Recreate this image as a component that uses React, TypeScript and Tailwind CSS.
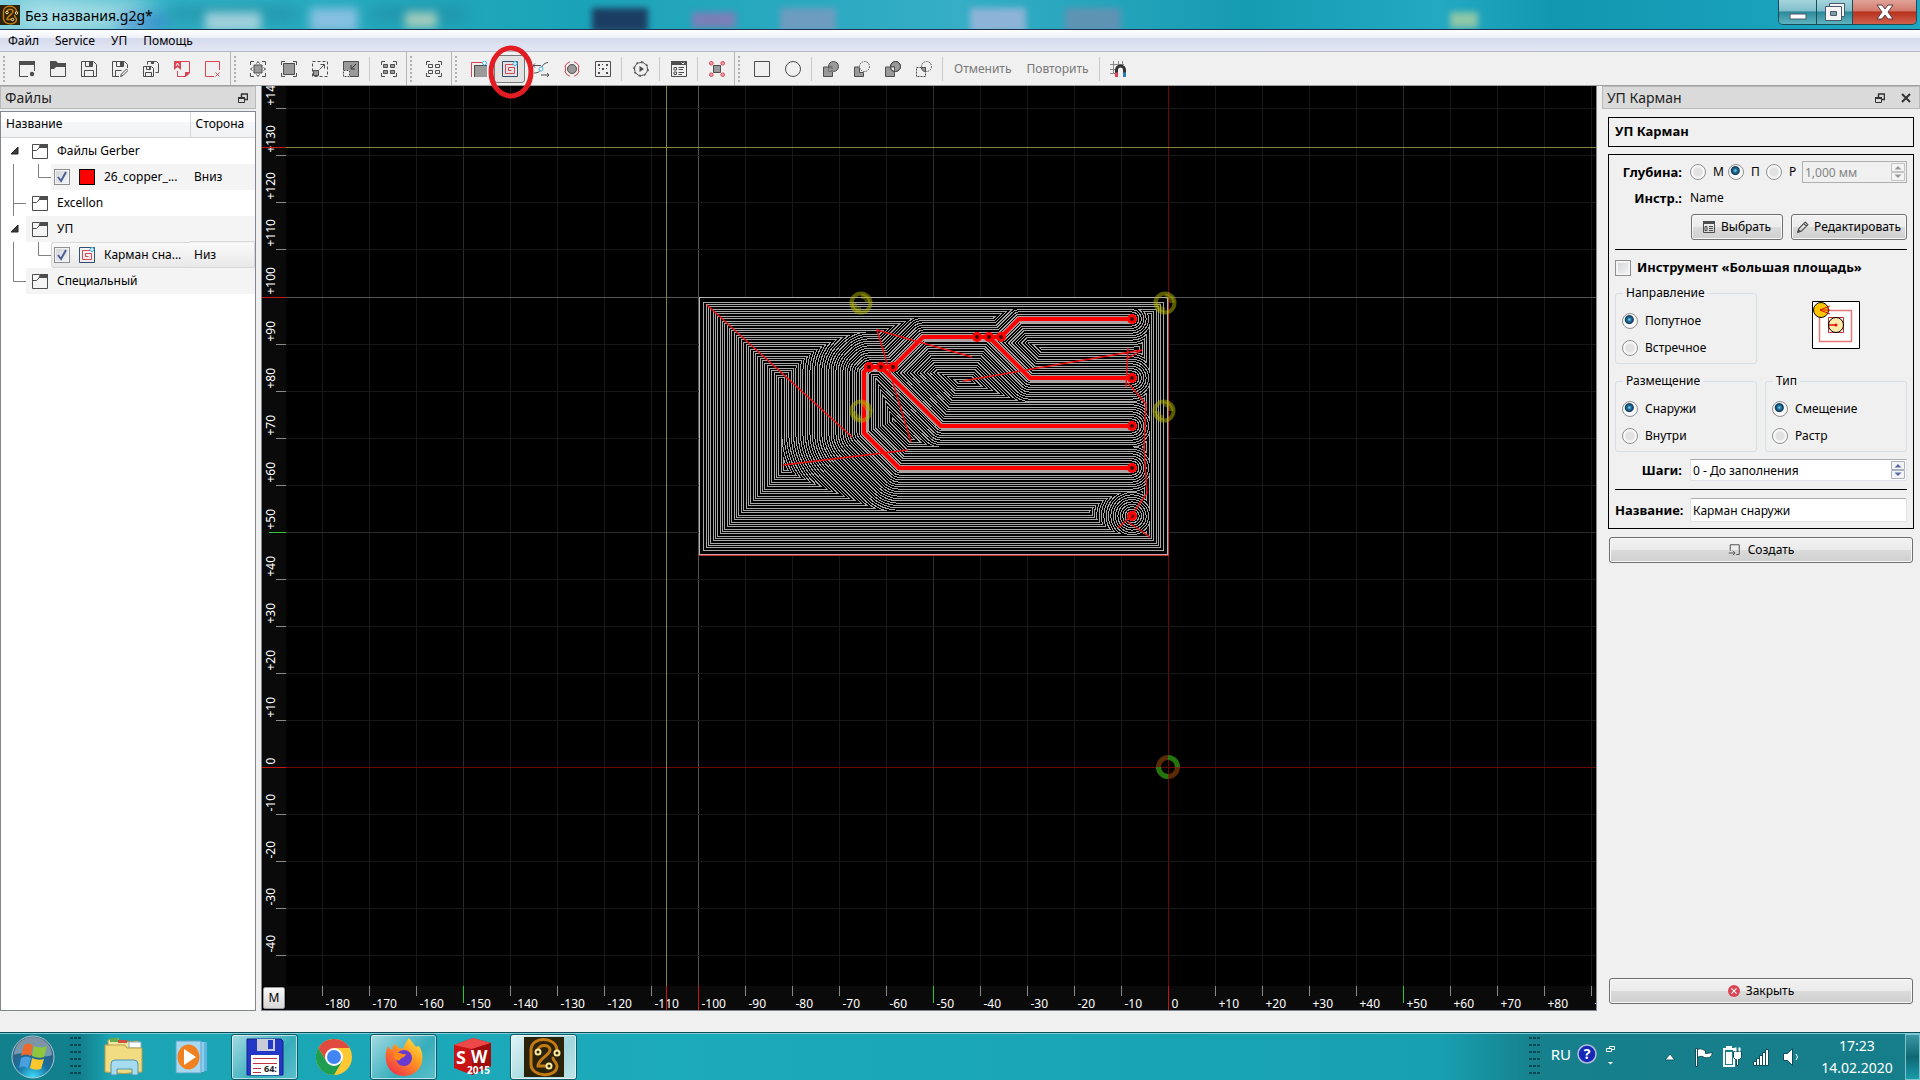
import type { ReactNode } from 'react';

/* ---------- icons ---------- */

const G = '#4d4d4d';
const R = '#da4453';
const B = '#3daee9';

function Icon({ children, size = 16 }: { children: ReactNode; size?: number }) {
  return (
    <svg width={size} height={size} viewBox="0 0 16 16" fill="none" stroke={G} strokeWidth="1" className="shrink-0">
      {children}
    </svg>
  );
}

const corners = <path d="M.5 4V.5H4M12 .5h3.5V4M15.5 12v3.5H12M4 15.5H.5V12" />;

const icons = {
  newFile: (
    <Icon>
      <path d="M0 0h16v4H0z" fill={G} stroke="none" />
      <path d="M.5 3v12.5H9M15.5 3v7" />
      <circle cx="13" cy="13" r="2.2" fill={G} stroke="none" />
    </Icon>
  ),
  open: (
    <Icon>
      <path d="M0 0h6l2 2h8v4H6L4 8H0z" fill={G} stroke="none" />
      <path d="M.5 4v11.5h15V4" />
    </Icon>
  ),
  save: (
    <Icon>
      <path d="M.5.5h12l3 3v12H.5zM4.5.5v5h7v-5M3.5 15.5v-6h9v6" />
      <path d="M8 1h3v4H8z" fill={G} stroke="none" />
    </Icon>
  ),
  saveAs: (
    <Icon>
      <path d="M7 15.5H.5V.5h12l3 3V7M4.5.5v5h7v-5M3.5 15.5v-6h6" />
      <path d="M8 1h3v4H8z" fill={G} stroke="none" />
      <path d="M8.5 15.5l1-2.5 5-5 1.5 1.5-5 5z" />
    </Icon>
  ),
  saveAll: (
    <Icon>
      <path d="M.5 5.5h8l2 2v8H.5zM3.5 5.5v3h4v-3M2.5 15.5v-4h6v4M4.5 3.5v-3h9l2 2v9h-3" />
      <path d="M6 6h2v2H6zM8 1h3v2H8z" fill={G} stroke="none" />
    </Icon>
  ),
  closeDoc: (
    <Icon>
      <g stroke={R}>
        <path d="M7 .5h8.5V12l-3.5 3.5H3.5V10" />
        <path d="M15.5 11.5h-4v4z" fill={R} />
        <path d="M0 0h7v9L3.5 6 0 9z" fill={R} stroke="none" />
        <path d="M2 5l1.5-3L5 5" stroke="#fff" />
      </g>
    </Icon>
  ),
  closeAll: (
    <Icon>
      <path d="M9 15.5H.5V.5h14V9M10.5 11.5l4 4M14.5 11.5l-4 4" stroke={R} />
    </Icon>
  ),
  fit: (
    <Icon>
      {corners}
      <path d="M4 4h8v8H4z" fill="#9a9a9a" />
      <path d="M6.5 2.5l1.5-2 1.5 2M6.5 13.5l1.5 2 1.5-2M2.5 6.5l-2 1.5 2 1.5M13.5 6.5l2 1.5-2 1.5" />
    </Icon>
  ),
  fitAll: (
    <Icon>
      {corners}
      <path d="M2.5 2.5h11v11h-11z" fill="#9a9a9a" />
    </Icon>
  ),
  zoomOut: (
    <Icon>
      <path d="M.5.5h15v15H.5z" strokeDasharray="3 2" />
      <path d="M1.5 9.5h5v5h-5z" fill="#9a9a9a" />
      <path d="M7.5 8.5L12 4M8.5 3.5h4v4" />
    </Icon>
  ),
  zoomIn: (
    <Icon>
      <path d="M.5.5h15v15H.5z" fill="#9a9a9a" />
      <path d="M0 9h7v7H0z" fill="#efefef" stroke="none" />
      <path d="M.5 9.5h6v6h-6z" strokeDasharray="2 1" />
      <path d="M13 3L8.5 7.5M8 4v4h4" stroke="#333" />
    </Icon>
  ),
  group: (
    <Icon>
      {corners}
      <path d="M2.5 3.5h4v3h-4zM9.5 3.5h4v3h-4zM2.5 9.5h4v3h-4zM9.5 9.5h4v3h-4z" fill="#9a9a9a" />
    </Icon>
  ),
  ungroup: (
    <Icon>
      {corners}
      <path d="M2.5 3.5h4v3h-4zM9.5 3.5h4v3h-4zM2.5 9.5h4v3h-4zM9.5 9.5h4v3h-4z" />
    </Icon>
  ),
  profile: (
    <Icon>
      <path d="M3 4h13v12H3z" fill="#9a9a9a" stroke="none" />
      <path d="M3.5 16V4.5H16" />
      <path d="M.5 16V1.5H11" stroke={R} />
      <circle cx="13.5" cy="2" r="2" stroke={B} fill="#fff" />
    </Icon>
  ),
  pocket: (
    <Icon>
      <path d="M.5.5h15v15H.5z" stroke="#31506e" />
      <path d="M11 3.5H3.5v9h9v-6h-6v3h3" stroke={R} />
      <circle cx="13" cy="2.5" r="2" stroke={B} fill="#d8f0fc" />
    </Icon>
  ),
  thread: (
    <Icon>
      <path d="M1 12c5 0 6-2 7-4s2-6 7-6.500" />
      <path d="M0 4.500h8M2 2.500l-2 2 2 2" />
      <path d="M8 14h8M14 12l2 2-2 2" />
      <circle cx="8" cy="8" r="2" stroke={B} fill="#fff" />
    </Icon>
  ),
  drill: (
    <Icon>
      <circle cx="8" cy="8" r="4.5" fill="#9a9a9a" />
      <path d="M6 .8A7.500 7.500 0 0 0 .8 6M.8 10A7.500 7.500 0 0 0 6 15.200M10 15.200a7.500 7.500 0 0 0 5.200-5.200M15.200 6A7.500 7.500 0 0 0 10 .8" stroke={R} />
      <path d="M1.5 5.5v5M14.5 5.5v5" stroke={R} />
    </Icon>
  ),
  dice: (
    <Icon>
      <path d="M.5.5h15v15H.5z" />
      <path d="M3 3h2v2H3zM11 3h2v2h-2zM7 7h2v2H7zM3 11h2v2H3zM11 11h2v2h-2zM7 3h1v1H7zM4 7h1v1H4zM11 7h1v1h-1z" fill={G} stroke="none" />
    </Icon>
  ),
  run: (
    <Icon>
      <circle cx="8" cy="8" r="6.5" />
      <circle cx="8" cy="8" r="7.3" strokeDasharray="2.5 3.2" />
      <path d="M6.5 5l4.5 3-4.5 3z" fill={G} stroke="none" />
    </Icon>
  ),
  props: (
    <Icon>
      <path d="M0 0h16v4H0z" fill={G} stroke="none" />
      <path d="M10.5 1.5l1.5 1.5 1.5-1.5" stroke="#fff" />
      <path d="M.5 3v12.5h15V3" />
      <path d="M3 6.5h2.5V9H3zM3 11h2.5v2.5H3zM7.5 6.5H13M7.5 8.5H12M7.5 11.5H13M7.5 13.5H11" />
    </Icon>
  ),
  snap: (
    <Icon>
      <path d="M4.5 4.5h7v7h-7z" fill="#9a9a9a" />
      <g stroke={R} fill="#f0a0a8">
        <circle cx="2.3" cy="2.3" r="1.8" />
        <circle cx="13.7" cy="2.3" r="1.8" />
        <circle cx="2.3" cy="13.7" r="1.8" />
        <circle cx="13.7" cy="13.7" r="1.8" />
      </g>
    </Icon>
  ),
  square: (
    <Icon>
      <path d="M.5.5h15v15H.5z" />
    </Icon>
  ),
  circle: (
    <Icon>
      <circle cx="8" cy="8" r="7.5" />
    </Icon>
  ),
  union: (
    <Icon>
      <circle cx="10.5" cy="5.5" r="5" fill="#9a9a9a" />
      <path d="M.5 6h9v9.5h-9z" fill="#9a9a9a" />
      <path d="M6 6.5h3.500v4H6z" stroke="#9a9a9a" fill="#9a9a9a" />
      <path d="M5.5 6.5H9v4H5.500z" strokeDasharray="1 1" />
    </Icon>
  ),
  subtract: (
    <Icon>
      <path d="M.5 6h5v5.500h4v4h-9z" fill="#9a9a9a" />
      <circle cx="10.5" cy="5.5" r="5" strokeDasharray="1.5 1" fill="#efefef" />
    </Icon>
  ),
  intersect: (
    <Icon>
      <circle cx="10.5" cy="5.5" r="5" fill="#9a9a9a" />
      <path d="M.5 6h9v9.5h-9z" fill="#9a9a9a" />
      <path d="M5.5 6h4v4.500c-2.500 0-4-1.500-4-4.500z" fill="#efefef" />
      <circle cx="10.5" cy="5.5" r="5" />
    </Icon>
  ),
  exclude: (
    <Icon>
      <circle cx="10.5" cy="5.5" r="5" strokeDasharray="1.5 1" />
      <path d="M.5 6.5h9v9h-9z" strokeDasharray="2 1" />
      <path d="M5.5 6.5h4v4c-2.500 0-4-1.500-4-4z" fill="#9a9a9a" />
    </Icon>
  ),
  magnet: (
    <Icon>
      <path d="M0 3.5h14M0 8.5h6M3.5 0v13M8.5 0v5M12.5 0v4M0 12.5h5" stroke="#888" />
      <path d="M6.500 12V9a4 4 0 0 1 8 0v3" stroke="#333" strokeWidth="3" />
      <path d="M6.500 11.500V16" stroke={R} strokeWidth="3" />
      <path d="M14.500 11.500V16" stroke="#2980b9" strokeWidth="3" />
    </Icon>
  ),
  folder: (
    <Icon>
      <path d="M.5 1.500h6.500l1.500 1h7v13H.5z" />
      <path d="M8 1h8v4H6.500z" fill={G} stroke="none" />
      <path d="M.5 7.5h4l3-3h8" />
    </Icon>
  ),
  pencil: (
    <Icon size={12}>
      <path d="M1 15l1.500-5L11 1.500 14.500 5 6 13.500zM9 3.500L12.500 7" strokeWidth="1.5" />
      <path d="M1 15l1-4 3 3z" fill={G} />
    </Icon>
  ),
  create: (
    <Icon size={12}>
      <path d="M3 9V1h12v13h-4M1 12h8M6.500 9l3 3-3 3" strokeWidth="1.3" />
    </Icon>
  ),
  cancel: (
    <Icon size={12}>
      <circle cx="8" cy="8" r="8" fill={R} stroke="none" />
      <path d="M4.5 4.5l7 7M11.5 4.5l-7 7" stroke="#fff" strokeWidth="1.5" />
    </Icon>
  ),
  float: (
    <svg width="10" height="10" viewBox="0 0 10 10" fill="none" stroke="#333" className="shrink-0">
      <path d="M3 1h7M3.5 1v5.5h6V1" strokeWidth="1.5" />
      <path d="M.5 4.5h6v5h-6z" fill="#dadada" />
      <path d="M0 5h7" strokeWidth="2" />
    </svg>
  ),
};

function AppLogo({ size }: { size: number }) {
  return (
    <svg width={size} height={size} viewBox="0 0 40 40" className="shrink-0">
      <rect width="40" height="40" fill="#2a2209" />
      <g fill="none" stroke="#c47a12" strokeWidth="3" strokeLinecap="round">
        <path d="M14 13C15 7 26 7 26 13c0 5-12 9-12 16h10" />
        <path d="M7 27V13C7-1 32-1 33 13M7 27c0 14 26 14 26 2 0-4-4-5-4-8" />
      </g>
      <g fill="#2a2209" stroke="#ffe8a0" strokeWidth="2">
        <circle cx="14" cy="15" r="2.5" />
        <circle cx="33" cy="16" r="2.5" />
        <circle cx="25" cy="29" r="2.5" />
      </g>
    </svg>
  );
}

/* ---------- window chrome ---------- */

function TitleBar() {
  return (
    <header className="relative flex h-[30px] shrink-0 items-start overflow-hidden border-b border-[#1c3354] bg-[linear-gradient(90deg,#7fd0dd_0,#2fb0c4_180px,#1aa3b8_30%,#35aec6_50%,#159bb2_65%,#23a9c2_75%,#1297b0_81%,#1fa8c2_100%)]">
      <div className="absolute left-5 top-1 h-6 w-32 rounded-full bg-white/60 blur-md" />
      <div className="absolute left-[120px] top-4 h-3 w-12 bg-[#2a6ad0]/70 blur-sm" />
      <div className="absolute left-[170px] top-2 h-3 w-32 bg-[#1c7f96]/60 blur-sm" />
      <div className="absolute left-[205px] top-3 h-5 w-14 bg-[#cfe3ea]/70 blur-[5px]" />
      <div className="absolute left-[310px] top-2 h-6 w-12 bg-[#9cc4e8]/80 blur-[5px]" />
      <div className="absolute left-[370px] top-2 h-3 w-24 bg-[#1c7f96]/60 blur-sm" />
      <div className="absolute left-[405px] top-3 h-4 w-8 bg-[#c4d8c0]/80 blur-[5px]" />
      <div className="absolute left-[592px] top-2 h-6 w-14 bg-[#1c3d63] blur-[3px]" />
      <div className="absolute left-[692px] top-3 h-4 w-11 bg-[#7a7fb8] blur-[3px]" />
      <div className="absolute left-[780px] top-2 h-6 w-14 bg-[#6d9cc0] blur-[3px]" />
      <div className="absolute left-[970px] top-2 h-6 w-14 bg-[#8db4d8] blur-[3px]" />
      <div className="absolute left-[1065px] top-2 h-6 w-14 bg-[#5f93b4] blur-[3px]" />
      <div className="absolute left-[1450px] top-3 h-4 w-7 bg-[#8dc7a8] blur-[3px]" />
      <div className="relative flex h-[30px] flex-1 items-center gap-[5px]">
        <AppLogo size={20} />
        <h1 className="text-[14px] text-black">Без названия.g2g*</h1>
      </div>
      <div className="relative mr-[3px] flex h-[25px] overflow-hidden rounded-b-[5px] border border-t-0 border-[#1f4a58]">
        <button aria-label="Свернуть" className="flex w-[38px] items-center justify-center border-r border-[#1f4a58] bg-[linear-gradient(#a5d5de_0,#7fbfca_45%,#2b8a9a_50%,#5fb4c0_100%)]">
          <svg width="18" height="24"><rect x="1" y="14" width="16" height="5" fill="#fff" stroke="#4a5a6a" /></svg>
        </button>
        <button aria-label="Восстановить" className="flex w-[36px] items-center justify-center border-r border-[#1f4a58] bg-[linear-gradient(#a5d5de_0,#7fbfca_45%,#2b8a9a_50%,#5fb4c0_100%)]">
          <svg width="20" height="24" fill="#f4f4f4" stroke="#4a5a6a">
            <path d="M4.5 3.5h15v13h-15z" />
            <path d="M.5 6.5h16v14H.5z" />
            <path d="M5.5 11.5h6v4h-6z" fill="#7f9cac" />
          </svg>
        </button>
        <button aria-label="Закрыть окно" className="flex w-[63px] items-center justify-center bg-[linear-gradient(#e0a398_0,#d27a6c_45%,#b8321c_50%,#d0604c_100%)]">
          <svg width="20" height="24" viewBox="0 0 20 24">
            <path d="M2 5h5l3 4 3-4h5l-5 7 5 7h-5l-3-4-3 4H2l5-7z" fill="#fff" stroke="#5a3a44" />
          </svg>
        </button>
      </div>
    </header>
  );
}

const menu = ['Файл', 'Service', 'УП', 'Помощь'];

function MenuBar() {
  return (
    <nav className="flex h-[22px] shrink-0 border-b border-[#b3b7c6] bg-[linear-gradient(#fff_0,#f0f2fa_36%,#d5daec_38%,#e3e7f5_100%)]">
      {menu.map((item) => (
        <button key={item} className="px-2 text-[12px] leading-none text-black">
          {item}
        </button>
      ))}
    </nav>
  );
}

type Tool = [keyof typeof icons, string] | null;

const toolbars: Tool[][] = [
  [['newFile', 'Новый'], ['open', 'Открыть'], ['save', 'Сохранить'], ['saveAs', 'Сохранить как'], ['saveAll', 'Сохранить все'], ['closeDoc', 'Закрыть файл'], ['closeAll', 'Закрыть все']],
  [['fit', 'Вписать'], ['fitAll', '100%'], ['zoomOut', 'Увеличить'], ['zoomIn', 'Уменьшить'], null, ['group', 'Выделить все']],
  [['ungroup', 'Снять выделение']],
  [['profile', 'Профиль'], ['pocket', 'Карман'], ['thread', 'Резьба'], ['drill', 'Сверление'], ['dice', 'Растр'], null, ['run', 'Запуск'], null, ['props', 'Свойства'], null, ['snap', 'Штифты']],
];

function Handle() {
  return (
    <svg width="4" height="28" fill="#b0b0b0" className="ml-[3px] mr-1">
      {[1, 5, 9, 13, 17, 21, 25].map((y) => (
        <rect key={y} y={y} width="2" height="2" />
      ))}
    </svg>
  );
}

function Sep() {
  return <span className="mx-[3px] h-6 w-px bg-[#c9c9c9]" />;
}

function ToolButton({ tool }: { tool: Tool }) {
  if (!tool) return <Sep />;
  const [name, label] = tool;
  if (name === 'pocket') {
    return (
      <button aria-label={label} aria-pressed="true" className="relative flex h-7 w-[31px] items-center justify-center rounded-[3px] border border-[#777] bg-[#e2e2e2]">
        {icons[name]}
        <svg width="50" height="56" className="pointer-events-none absolute -left-[9px] -top-[12px] z-10">
          <ellipse cx="25" cy="28" rx="20" ry="24" fill="none" stroke="#e31b23" strokeWidth="5" />
        </svg>
      </button>
    );
  }
  return (
    <button aria-label={label} className="flex h-7 w-[31px] items-center justify-center">
      {icons[name]}
    </button>
  );
}

function Toolbars() {
  return (
    <div className="flex h-[34px] shrink-0 border-b border-[#a0a0a0] bg-[#f0f0f0]">
      {toolbars.map((tools, i) => (
        <div key={i} className="flex items-center border-r border-[#b5b5b5] pr-[2px]">
          <Handle />
          {tools.map((tool, j) => (
            <ToolButton key={j} tool={tool} />
          ))}
        </div>
      ))}
      <div className="flex items-center">
        <Handle />
        <ToolButton tool={['square', 'Прямоугольник']} />
        <ToolButton tool={['circle', 'Окружность']} />
        <Sep />
        <ToolButton tool={['union', 'Объединение']} />
        <ToolButton tool={['subtract', 'Вычитание']} />
        <ToolButton tool={['intersect', 'Пересечение']} />
        <ToolButton tool={['exclude', 'Исключение']} />
        <Sep />
        <button disabled className="px-2 text-[12px] text-[#787878]">Отменить</button>
        <button disabled className="px-[7px] text-[12px] text-[#787878]">Повторить</button>
        <Sep />
        <ToolButton tool={['magnet', 'Привязка']} />
      </div>
    </div>
  );
}

/* ---------- files dock ---------- */

function Tick({ label }: { label: string }) {
  return (
    <span className="relative inline-flex size-4 shrink-0">
      <input
        type="checkbox"
        defaultChecked
        aria-label={label}
        className="size-4 appearance-none border border-[#8e8f8f] bg-[linear-gradient(135deg,#d0d4d8,#f6f6f6)] shadow-[inset_0_0_0_1px_#f4f4f4]"
      />
      <svg width="16" height="16" className="pointer-events-none absolute inset-0">
        <path d="M4 8l3 4 5-9" fill="none" stroke="#4b5f97" strokeWidth="2" />
      </svg>
    </span>
  );
}

type Row = { name: string; side?: string; guide: string; open?: boolean; child?: 'gerber' | 'pocket' };

const rows: Row[] = [
  { name: 'Файлы Gerber', guide: '', open: true },
  { name: '26_copper_...', side: 'Вниз', guide: 'M12.5 0v26M37.5 0v13.5H50', child: 'gerber' },
  { name: 'Excellon', guide: 'M12.5 0v26M12.5 13.5H25' },
  { name: 'УП', guide: '', open: true },
  { name: 'Карман сна...', side: 'Низ', guide: 'M12.5 0v26M37.5 0v13.5H50', child: 'pocket' },
  { name: 'Специальный', guide: 'M12.5 0v13.5H25' },
];

function FilesDock() {
  return (
    <aside className="flex w-[256px] shrink-0 flex-col gap-[2px]">
      <div className="flex h-[23px] items-center justify-between border border-[#b9b9b9] bg-[#dadada] pl-1 pr-[7px]">
        <h2 className="text-[14px] text-[#222]">Файлы</h2>
        <button aria-label="Открепить">{icons.float}</button>
      </div>
      <div className="flex-1 border border-[#828790] bg-white">
        <table className="w-full table-fixed border-collapse text-left text-[12px]">
          <thead>
            <tr className="h-[25px] bg-[linear-gradient(#fff_0,#fff_40%,#f5f6f8_42%,#f1f2f4_100%)]">
              <th className="w-[189px] border-b border-r border-[#d5d5d5] pl-[5px] font-normal">Название</th>
              <th className="border-b border-[#d5d5d5] pl-[5px] font-normal">Сторона</th>
            </tr>
          </thead>
          <tbody>
            {rows.map((row) => (
              <tr key={row.name} className="h-[26px] even:bg-[#f4f4f4]">
                <td className="p-0">
                  <div className="flex h-[26px] items-center">
                    <svg width={row.child ? 50 : 25} height="26" className="shrink-0 bg-white">
                      <path d={row.guide} fill="none" stroke="#808080" />
                      {row.open && <path d="M10 16h7V9z" fill="#3c3c3c" stroke="#222" />}
                    </svg>
                    {row.child ? (
                      <span className={row.child === 'pocket' ? 'flex h-[26px] flex-1 items-center gap-[9px] rounded-l-[3px] border border-r-0 border-[#d9d9d9] bg-[linear-gradient(#fafafa,#e8e8e8)] pl-[2px]' : 'flex h-[26px] flex-1 items-center gap-[9px] pl-[3px]'}>
                        <Tick label={row.name} />
                        {row.child === 'gerber' ? <span className="size-4 border border-black bg-[#f00]" /> : icons.pocket}
                        {row.name}
                      </span>
                    ) : (
                      <span className="flex items-center gap-[9px] pl-[6px]">
                        {icons.folder}
                        {row.name}
                      </span>
                    )}
                  </div>
                </td>
                <td className={row.child === 'pocket' ? 'rounded-r-[3px] border-y border-r border-[#d9d9d9] bg-[linear-gradient(#fafafa,#e8e8e8)] p-0 pl-1' : 'p-0 pl-1'}>{row.side}</td>
              </tr>
            ))}
          </tbody>
        </table>
      </div>
    </aside>
  );
}

/* ---------- drawing area ---------- */

const ORIGIN = { x: 882, y: 681 };
const xs = Array.from({ length: 28 }, (_, i) => (i - 18) * 10).map((v) => ({ v, p: Math.round(ORIGIN.x + v * 4.7) + 0.5 }));
const ys = Array.from({ length: 19 }, (_, i) => (14 - i) * 10).map((v) => ({ v, p: Math.round(ORIGIN.y - v * 4.705) + 0.5 }));

const gridColor = (v: number) => (v === 0 ? '#6e0808' : v % 100 === 0 ? '#555' : v % 50 === 0 ? '#2c2c2c' : '#181818');
const tickColor = (v: number) => (v % 100 === 0 ? '#c81414' : v % 50 === 0 ? '#35c435' : '#8a8a8a');
const tickLength = (v: number) => (v % 100 === 0 ? 24 : v % 50 === 0 ? 17 : 10);
const signed = (v: number) => (v > 0 ? `+${v}` : `${v}`);

const copper =
  'M691 251H715L733 233H846M703 251L744 292H846M607 281L637 251H691M583 281H607M595 281L655 340H846M583 281L578 286V347L613 382H846M846 430h.1';
const pads = [[691, 251], [703, 251], [715, 251], [583, 281], [595, 281], [607, 281], [846, 233], [846, 292], [846, 340], [846, 382], [846, 430]];
const board = 'M413 211.5H882V469H413z';
const travel =
  'M421 219L566 351M497 379L622 364M625 356L591 244L686 271M677 295L856 264M842 262L840 301M842 297L860 318L858 361L861 407L846 429L832 442M842 436L864 451M842 272L856 264';

// distance levels of the pocket, widest first so that narrower ones cover them
const levels = Array.from({ length: 46 }, (_, i) => (46 - i) * 2.35);
const markers = [[575, 217], [879, 217], [575, 325], [878, 325]];

function Plot() {
  return (
    <svg className="block size-full bg-black" role="img" aria-label="Плата">
      <defs>
        <clipPath id="board">
          <path d={board} />
        </clipPath>
      </defs>
      <g shapeRendering="crispEdges">
        {xs.map(({ v, p }) => (
          <line key={v} x1={p} x2={p} y1="0" y2="100%" stroke={gridColor(v)} />
        ))}
        {ys.map(({ v, p }) => (
          <line key={v} x1="0" x2="100%" y1={p} y2={p} stroke={gridColor(v)} />
        ))}
        <line x1="380.5" x2="380.5" y1="0" y2="100%" stroke="#84843a" />
        <line x1="0" x2="100%" y1="61.5" y2="61.5" stroke="#84843a" />
      </g>
      <g clipPath="url(#board)" fill="none" shapeRendering="crispEdges">
        {levels.map((t) => (
          <g key={t}>
            <g stroke="#a8a8a8">
              {t > 3 && <path d={board} strokeWidth={2 * t + 1} />}
              <path d={copper} strokeWidth={2 * t + 1} strokeLinecap="round" strokeLinejoin="round" />
            </g>
            <g stroke="#000">
              {t > 3 && <path d={board} strokeWidth={2 * t - 1} />}
              <path d={copper} strokeWidth={2 * t - 1} strokeLinecap="round" strokeLinejoin="round" />
            </g>
          </g>
        ))}
        <path d={copper} stroke="#b0a0a0" strokeWidth="7" strokeLinejoin="round" />
      </g>
      <g shapeRendering="crispEdges" fill="none">
        <path d="M413.5 469V211.5H881V468" stroke="#b4b4b4" />
        <path d="M413 469.5H882.5V212" stroke="#c03030" />
        <path d="M414 468.5H882" stroke="#c8a0a0" />
      </g>
      <path d={copper} fill="none" stroke="#f00" strokeWidth="4" strokeLinejoin="round" />
      {pads.map(([x, y]) => (
        <circle key={`${x}-${y}`} cx={x} cy={y} r="3.5" fill="#400" stroke="#f00" strokeWidth="3" />
      ))}
      <path d={travel} fill="none" stroke="#f01010" strokeWidth="1.4" />
      {markers.map(([x, y]) => (
        <g key={`${x}-${y}`} fill="none" stroke="#b4b400" strokeOpacity="0.5">
          <circle cx={x} cy={y} r="9.5" strokeWidth="4" />
          <path d={`M${x} ${y - 7}a7 7 0 0 1 7 7M${x} ${y + 7}a7 7 0 0 1 -7 -7`} strokeWidth="5" strokeOpacity="0.4" />
        </g>
      ))}
      <g fill="none" strokeWidth="5" strokeOpacity="0.75">
        <circle cx="882" cy="681" r="9.5" stroke="#7a3a08" />
        <path d="M872.5 681a9.5 9.5 0 0 0 9.5 9.5M882 671.5a9.5 9.5 0 0 1 9.5 9.5" stroke="#109010" />
      </g>
    </svg>
  );
}

function Canvas() {
  return (
    <main className="ml-[5px] grid min-w-0 flex-1 grid-cols-[24px_minmax(0,1fr)] grid-rows-[minmax(0,1fr)_24px] border-b border-l border-r border-[#828790] bg-black">
      <svg className="block size-full bg-[#0a0a0a] text-[12px]" fill="#fff">
        {ys.map(({ v, p }) => (
          <g key={v}>
            <line x1={24 - tickLength(v)} x2="24" y1={p} y2={p} stroke={tickColor(v)} shapeRendering="crispEdges" />
            <text transform={`translate(13 ${p - 3}) rotate(-90)`}>{signed(v)}</text>
          </g>
        ))}
        <line x1="0" x2="24" y1="61.5" y2="61.5" stroke="#c81414" />
      </svg>
      <Plot />
      <button className="m-px rounded-[2px] border border-[#999] bg-[linear-gradient(#f8f8f8,#d8d8d8)] text-[12px] leading-none text-black">M</button>
      <svg className="block size-full bg-[#0a0a0a] text-[12px]" fill="#fff">
        {xs.map(({ v, p }) => (
          <g key={v}>
            <line x1={p} x2={p} y1="0" y2={tickLength(v)} stroke={tickColor(v)} shapeRendering="crispEdges" />
            <text x={p + 3} y="22">{signed(v)}</text>
          </g>
        ))}
        <line x1="380.5" x2="380.5" y1="0" y2="24" stroke="#c81414" />
      </svg>
    </main>
  );
}

/* ---------- pocket dock ---------- */

const radioClass =
  'size-4 shrink-0 appearance-none rounded-full border border-[#8e8f8f] bg-[radial-gradient(circle,#e2e2e2_0,#e2e2e2_4px,#fbfbfb_6px)] checked:bg-[radial-gradient(circle_at_45%_40%,#7fd4f4_0,#1f6f9c_2px,#123a58_4px,#f8f8f8_5px)]';

const buttonClass =
  'flex h-[26px] items-center justify-center rounded-[3px] border border-[#707070] bg-[linear-gradient(#f2f2f2_0,#ebebeb_48%,#dadada_52%,#cfcfcf_100%)] text-[12px] text-black shadow-[inset_0_0_0_1px_#f8f8f8]';

function RadioGroup({ title, name, options }: { title: string; name: string; options: string[] }) {
  return (
    <fieldset className="w-[142px] rounded-[3px] border border-[#d5dfe5] pb-[7px] pl-[6px]">
      <legend className="ml-[1px] px-[3px] text-[12px] leading-4">{title}</legend>
      <div className="flex flex-col gap-[11px] pt-3">
        {options.map((option, i) => (
          <label key={option} className="flex h-4 items-center gap-[7px] text-[12px]">
            <input type="radio" name={name} defaultChecked={i === 0} className={radioClass} />
            {option}
          </label>
        ))}
      </div>
    </fieldset>
  );
}

function Spin({ disabled }: { disabled?: boolean }) {
  const color = disabled ? '#9a9a9a' : '#5a68a8';
  return (
    <svg width="14" height="18" className="pointer-events-none absolute right-[2px] top-[2px]">
      <path d="M.5.5h13v8H.5zM.5 9.5h13v8H.5z" fill="#f4f4f4" stroke={disabled ? '#c4c4c4' : '#a8b0c0'} />
      <path d="M3.5 6.5h7L7 3zM3.5 11.5h7L7 15z" fill={color} />
    </svg>
  );
}

function PocketDock() {
  return (
    <aside className="ml-[5px] flex w-[318px] shrink-0 flex-col">
      <div className="flex h-[23px] items-center border border-[#b9b9b9] bg-[#dadada] pl-1 pr-[8px]">
        <h2 className="flex-1 text-[14px] text-[#222]">УП Карман</h2>
        <button aria-label="Открепить">{icons.float}</button>
        <button aria-label="Закрыть панель" className="ml-4">
          <svg width="10" height="10"><path d="M1 1l8 8M9 1L1 9" stroke="#333" strokeWidth="2" /></svg>
        </button>
      </div>
      <form className="flex flex-1 flex-col px-[6px] pb-[7px] pt-2 text-[12px]" onSubmit={(e) => e.preventDefault()}>
        <h3 className="flex h-[30px] items-center border border-black pl-[6px] text-[13px] font-bold">УП Карман</h3>
        <div className="mt-[7px] border border-black p-[6px]">
          <div className="grid grid-cols-[67px_minmax(0,1fr)] gap-x-2">
            <span className="text-right text-[13px] font-bold leading-[22px]">Глубина:</span>
            <div className="flex items-center">
              {['М', 'П', 'Р'].map((mode) => (
                <label key={mode} className="flex w-[38px] items-center gap-[7px] last-of-type:w-9">
                  <input type="radio" name="depth" defaultChecked={mode === 'П'} className={radioClass} />
                  {mode}
                </label>
              ))}
              <span className="relative min-w-0 flex-1">
                <input aria-label="Глубина, мм" disabled defaultValue="1,000 мм" className="block h-[22px] w-full border border-[#afafaf] bg-[#f0f0f0] px-[2px] text-[#838383]" />
                <Spin disabled />
              </span>
            </div>
            <span className="mt-[7px] text-right text-[13px] font-bold leading-4">Инстр.:</span>
            <span className="mt-[7px] leading-4">Name</span>
            <div className="col-start-2 mt-2 flex gap-[8px] pl-px">
              <button className={`${buttonClass} w-[92px] gap-[6px]`}>
                <svg width="12" height="12" fill="none" stroke={G}>
                  <path d="M.5.5h11v11H.5zM2 5.5h2v4H2zM6 5.5h4M6 7.5h4M6 9.5h4" />
                  <path d="M0 1.5h12" strokeWidth="3" />
                </svg>
                Выбрать
              </button>
              <button className={`${buttonClass} flex-1 gap-[5px]`}>
                {icons.pencil}
                Редактировать
              </button>
            </div>
          </div>
          <hr className="mt-[9px] border-black" />
          <label className="mt-[10px] flex h-4 items-center gap-[6px] text-[13px] font-bold">
            <input type="checkbox" className="size-4 appearance-none border border-[#8e8f8f] bg-[linear-gradient(135deg,#cfd2d5,#f6f6f6)] shadow-[inset_0_0_0_2px_#f4f4f4]" />
            Инструмент «Большая площадь»
          </label>
          <div className="mt-[9px] flex items-center justify-between">
            <RadioGroup title="Направление" name="direction" options={['Попутное', 'Встречное']} />
            <svg width="48" height="48" className="mr-[47px]">
              <path d="M.5.5h47v47H.5z" fill="#fff" stroke="#000" />
              <path d="M8 9.5h31.5v31h-32V9" fill="none" stroke="#e87878" strokeWidth="1.5" />
              <path d="M16.5 16.5h15v15h-15z" fill="none" stroke="#c03030" />
              <circle cx="9" cy="9" r="7.5" fill="#ffc400" stroke="#000" />
              <path d="M18 5L8 9l10 4M8 9h10" fill="none" stroke="#e01010" />
              <circle cx="24" cy="24" r="7.5" fill="#ffe9a8" stroke="#000" />
              <path d="M17 24h8" stroke="#e01010" strokeWidth="1.5" />
              <circle cx="24" cy="24" r="1.5" fill="#e01010" />
            </svg>
          </div>
          <div className="mt-[9px] flex justify-between">
            <RadioGroup title="Размещение" name="side" options={['Снаружи', 'Внутри']} />
            <RadioGroup title="Тип" name="kind" options={['Смещение', 'Растр']} />
          </div>
          <div className="mt-[7px] grid grid-cols-[67px_minmax(0,1fr)] gap-x-2">
            <label htmlFor="steps" className="text-right text-[13px] font-bold leading-[22px]">Шаги:</label>
            <span className="relative">
              <input id="steps" defaultValue="0 - До заполнения" className="block h-[22px] w-full border border-[#e2e3ea] border-t-[#abadb3] bg-white px-[2px]" />
              <Spin />
            </span>
          </div>
          <hr className="mt-2 border-black" />
          <div className="mt-2 grid grid-cols-[67px_minmax(0,1fr)] gap-x-2">
            <label htmlFor="title" className="text-right text-[13px] font-bold leading-6">Название:</label>
            <input id="title" defaultValue="Карман снаружи" className="block h-6 w-full rounded-[2px] border border-[#e2e3ea] border-t-[#abadb3] bg-white px-[2px]" />
          </div>
        </div>
        <button className={`${buttonClass} mx-px mt-2 gap-2`}>
          {icons.create}
          Создать
        </button>
        <button className={`${buttonClass} mx-px mt-auto gap-[6px]`}>
          {icons.cancel}
          Закрыть
        </button>
      </form>
    </aside>
  );
}

/* ---------- taskbar ---------- */

function Grip() {
  return (
    <svg width="12" height="42" fill="#0a4854" className="shrink-0">
      {[1, 8, 15, 22, 29, 36].map((y) => (
        <path key={y} d={`M0 ${y}h3v2H0zM4 ${y}h3v2H4zM8 ${y}h3v2H8z`} />
      ))}
    </svg>
  );
}

const taskClass = 'flex h-[46px] w-[67px] items-center justify-center rounded-[3px]';
const activeTask = 'border border-[#0d5966] shadow-[inset_0_0_0_1px_rgba(255,255,255,0.6)]';

function Taskbar() {
  return (
    <footer className="flex h-12 shrink-0 items-center border-t border-[#0b4d5a] bg-[linear-gradient(90deg,#127f8d_0,#127f8d_80px,#1ba4b4_110px,#1cabbb_35%,#17a0b0_75%,#16808c_80%,#167e8a_100%)] shadow-[inset_0_1px_0_#7fcbd4]">
      <button aria-label="Пуск" className="ml-[11px]">
        <svg width="44" height="44" viewBox="0 0 44 44">
          <defs>
            <radialGradient id="orb" cx="0.5" cy="1" r="0.9">
              <stop offset="0" stopColor="#3fe0ff" />
              <stop offset="0.45" stopColor="#1670a0" />
              <stop offset="1" stopColor="#3b5a74" />
            </radialGradient>
          </defs>
          <circle cx="22" cy="22" r="21" fill="url(#orb)" stroke="#a9c8d4" />
          <path d="M3 20a19 18 0 0 1 38 0C30 25 14 15 3 20z" fill="#fff" fillOpacity="0.35" />
          <path d="M13 10q4-3 9 0l-2 11q-5-3-10 0z" fill="#ee6a2c" />
          <path d="M23 11q6 3 13 0l-3 11q-6 2-12-1z" fill="#8fc63c" />
          <path d="M10 23q5-3 10 0l-3 10q-5-3-9 0z" fill="#4a9fe0" />
          <path d="M21 23q6 3 12 1l-3 10q-6 2-11-1z" fill="#fcc72c" />
        </svg>
      </button>
      <div className="ml-[15px]"><Grip /></div>
      <button aria-label="Проводник" className={`${taskClass} ml-[8px]`}>
        <svg width="40" height="40">
          <path d="M4 3l10-2 2 4 18-1v10H4z" fill="#f4e6a0" stroke="#b09a4a" />
          <path d="M6 1h8v4H6z" fill="#5fae4a" />
          <path d="M14 3h9v3h-9z" fill="#d05040" />
          <path d="M25 5h12v6H25z" fill="#fff" stroke="#8ab" />
          <path d="M1 8h20l2 3h15v24q-18 3-37 0z" fill="#f2dc82" stroke="#b79c44" />
          <path d="M7 38V27q0-4 4-4h19q4 0 4 4v11h-6v-6H13v6z" fill="#a6dcf0" stroke="#4f94b4" />
        </svg>
      </button>
      <button aria-label="Медиаплеер" className={taskClass}>
        <svg width="34" height="36" className="ml-[2px]">
          <path d="M8 3h24v29H8z" fill="#5fb4e0" />
          <path d="M5 3h24v30H5z" fill="#8fcdec" />
          <path d="M1 2h25v32H1z" fill="#a8d8f0" stroke="#5aa4cc" />
          <ellipse cx="13.5" cy="18" rx="11" ry="12.5" fill="#f08020" />
          <path d="M9 10v16l12-8z" fill="#fff" />
        </svg>
      </button>
      <button aria-label="Файловый менеджер" className={`${taskClass} ${activeTask} ml-[7px] bg-[linear-gradient(135deg,#a3dbe2_0,#37adbb_60%,#5cc0cb_100%)]`}>
        <svg width="38" height="38">
          <path d="M1 1h34l2 2v34H1z" fill="#2438c8" stroke="#14208a" />
          <path d="M11 1h18v12H11z" fill="#c8ccd8" />
          <path d="M22 2h5v9h-5z" fill="#2438c8" />
          <path d="M5 17h28v20H5z" fill="#fff" />
          <path d="M7 20.5h24M7 25.5h24M7 30.5h8M7 34.5h8" stroke="#c03040" />
          <text x="18" y="34" fontSize="9" fontWeight="700" fill="#222">64:</text>
        </svg>
      </button>
      <button aria-label="Chrome" className={taskClass}>
        <svg width="36" height="36" viewBox="0 0 36 36" className="ml-1">
          <circle cx="18" cy="18" r="18" fill="#fcc934" />
          <path d="M18 18v-9h15.600A18 18 0 0 0 2.400 9l8 13z" fill="#e04a3f" />
          <path d="M2.400 9A18 18 0 0 0 18 36l8-13.500-8-4.500-7.500 4.500z" fill="#1e9e50" />
          <circle cx="18" cy="18" r="9" fill="#fff" />
          <circle cx="18" cy="18" r="7" fill="#4285f4" />
        </svg>
      </button>
      <button aria-label="Firefox" className={`${taskClass} ${activeTask} ml-[5px] bg-[linear-gradient(135deg,#a3dbe2_0,#37adbb_60%,#5cc0cb_100%)]`}>
        <svg width="38" height="38" viewBox="0 0 38 38">
          <defs>
            <linearGradient id="fox" x1="1" y1="0" x2="0.2" y2="1">
              <stop offset="0" stopColor="#fff04a" />
              <stop offset="0.45" stopColor="#ff9a20" />
              <stop offset="1" stopColor="#f0304a" />
            </linearGradient>
          </defs>
          <path d="M24 0c3 4 5 6 7 9 2-1 2-1 3-1 8 12 2 30-15 30C2 38-3 20 3 8c1 2 2 3 4 4C8 8 8 7 11 6c1 3 3 4 7 5 2-5 3-7 6-11z" fill="url(#fox)" />
          <circle cx="19" cy="20" r="8" fill="#6a3ad0" />
          <path d="M9 15c5-2 7 2 12 1-1 4-5 3-6 6-3 2-7-2-6-7z" fill="#ff8a1c" />
        </svg>
      </button>
      <button aria-label="SolidWorks 2015" className={`${taskClass} ml-[2px]`}>
        <svg width="40" height="38">
          <path d="M20 0l18 5v23l-19 9L1 30V7z" fill="#c81414" />
          <path d="M20 0l18 5-19 6L1 7z" fill="#ec4848" />
          <path d="M19 11l19-6v23l-19 9z" fill="#a00c0c" />
          <text x="3" y="26" fontSize="18" fontWeight="700" fill="#fff">S</text>
          <text x="18" y="25" fontSize="17" fontWeight="700" fill="#fff">W</text>
          <text x="14" y="36" fontSize="10" fontWeight="700" fill="#fff">2015</text>
        </svg>
      </button>
      <button aria-label="Без названия.g2g*" className={`${taskClass} ${activeTask} ml-[4px] bg-[linear-gradient(135deg,#e2f3f5_0,#a0d6dd_60%,#bfe4e8_100%)]`}>
        <AppLogo size={40} />
      </button>

      <div className="ml-auto flex items-center text-white">
        <Grip />
        <button className="mb-1 ml-[10px] text-[15px]">RU</button>
        <svg width="20" height="20" className="mb-[6px] ml-[6px]">
          <circle cx="10" cy="10" r="9" fill="#1428b8" stroke="#b8bcd8" strokeWidth="1.5" />
          <text x="10" y="15" textAnchor="middle" fontSize="14" fontWeight="700" fill="#fff">?</text>
        </svg>
        <svg width="10" height="24" fill="none" stroke="#fff" className="mb-1 ml-[9px]">
          <path d="M3.5 6V3.5h5v3H6M.5 5.5h5v3h-5z" />
          <path d="M2 19h5l-2.500 2.500z" fill="#fff" stroke="none" />
        </svg>
        <svg width="12" height="8" className="ml-[48px]"><path d="M1 7h10L6 1z" fill="#fff" stroke="#0e5c68" /></svg>
        <svg width="20" height="22" className="ml-[17px]" fill="#fff" stroke="#0e4c58">
          <path d="M2.5 2.5h2v18h-2zM4.5 3.5c4-2 6 1 8 1v3l7-1c-1 5-4 6-8 5-2-1-4-2-7 0z" />
        </svg>
        <svg width="20" height="22" className="ml-[9px]" stroke="#0e4c58">
          <path d="M2 3h10v17H2zM5 1h4v2H5z" fill="none" stroke="#fff" strokeWidth="2" />
          <path d="M4 6h6v12H4z" fill="#fff" stroke="none" />
          <path d="M11.5 5.5h8v6l-2 2h-1v6h-2v-6h-1l-2-2z" fill="#fff" />
          <path d="M13.5 1.5v4M17.5 1.5v4" stroke="#fff" strokeWidth="2" />
        </svg>
        <svg width="17" height="18" className="ml-[11px]" fill="#fff" stroke="#0e4c58">
          <path d="M.5 13.5h3v4h-3zM3.5 10.5h3v7h-3zM6.5 7.5h3v10h-3zM9.5 4.5h3v13h-3zM12.5 1.5h3v16h-3z" />
        </svg>
        <svg width="18" height="20" className="ml-[13px]" fill="#fff" stroke="#0e4c58">
          <path d="M.5 6.5h4l5-5v17l-5-5h-4z" />
          <path d="M13 7q3 3 0 6" fill="none" stroke="#fff" />
        </svg>
        <button className="ml-[17px] flex w-[78px] flex-col text-center text-[14px] leading-[22px]">
          <time>17:23</time>
          <time>14.02.2020</time>
        </button>
        <button aria-label="Показать рабочий стол" className="ml-[9px] h-[46px] w-[15px] border border-[#7fc4cc] bg-[linear-gradient(#3a98a4,#0e6874_50%,#1a9aaa)]" />
      </div>
    </footer>
  );
}

export default function App() {
  return (
    <div className="flex h-screen w-full flex-col overflow-hidden bg-[#f0f0f0] font-['Noto_Sans','Open_Sans',sans-serif] text-black">
      <TitleBar />
      <MenuBar />
      <Toolbars />
      <div className="flex min-h-0 flex-1">
        <FilesDock />
        <Canvas />
        <PocketDock />
      </div>
      <div className="h-[21px] shrink-0" role="status" />
      <Taskbar />
    </div>
  );
}
